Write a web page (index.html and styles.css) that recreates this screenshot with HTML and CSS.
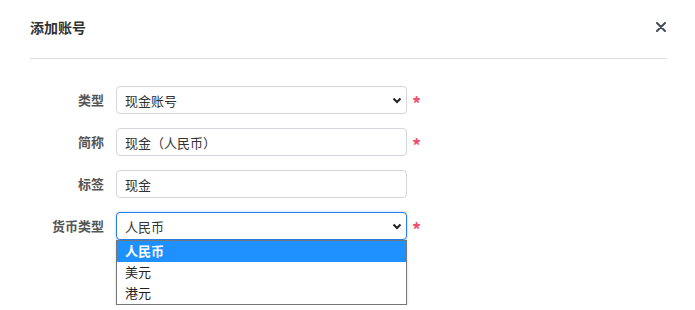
FILE: index.html
```html
<!DOCTYPE html>
<html>
<head>
    <meta charset="utf-8">
    <title>添加账号</title>
    <link rel="stylesheet" href="styles.css">
</head>
<body>
    <div class="modal">
        <div class="modal-header">
            <h2 class="modal-title">添加账号</h2>
            <span class="modal-close">
                <svg width="10" height="10" viewBox="0 0 10 10"><path d="M1 1L9 9M9 1L1 9" stroke="#444b54" stroke-width="2" stroke-linecap="round"/></svg>
            </span>
        </div>

        <div class="form">
            <div class="form-row">
                <label class="form-label">类型</label>
                <div class="field select">
                    <span>现金账号</span>
                    <svg class="chevron" width="10" height="7" viewBox="0 0 10 7"><path d="M1.5 1.5L5 5L8.5 1.5" fill="none" stroke="#222" stroke-width="2"/></svg>
                </div>
                <span class="required">*</span>
            </div>
            <div class="form-row">
                <label class="form-label">简称</label>
                <div class="field">现金（人民币）</div>
                <span class="required">*</span>
            </div>
            <div class="form-row">
                <label class="form-label">标签</label>
                <div class="field">现金</div>
            </div>
            <div class="form-row">
                <label class="form-label">货币类型</label>
                <div class="select-wrap">
                    <div class="field select focus">
                        <span>人民币</span>
                        <svg class="chevron" width="10" height="7" viewBox="0 0 10 7"><path d="M1.5 1.5L5 5L8.5 1.5" fill="none" stroke="#222" stroke-width="2"/></svg>
                    </div>
                    <!-- 展开的下拉列表 -->
                    <ul class="dropdown">
                        <li class="active">人民币</li>
                        <li>美元</li>
                        <li>港元</li>
                    </ul>
                </div>
                <span class="required">*</span>
            </div>
        </div>
    </div>
</body>
</html>
```

FILE: styles.css
```css
body {
    margin: 0;
    background: #fff;
    font-family: "Noto Sans CJK SC", "Liberation Sans", sans-serif;
    color: #333;
}

.modal {
    padding: 0 28px 0 30px;
}

.modal-header {
    display: flex;
    justify-content: space-between;
    align-items: flex-start;
    box-sizing: border-box;
    height: 59px;
    padding-top: 17px;
    border-bottom: 1px solid #dcdde6;
}

.modal-title {
    margin: 0;
    font-size: 14px;
    line-height: 20px;
    font-weight: bold;
    color: #333;
}

.modal-close {
    display: flex;
    margin-top: 5px;
    margin-right: 1px;
}

.form {
    padding-top: 27px;
    display: flex;
    flex-direction: column;
    gap: 14px;
}

.form-row {
    display: flex;
    align-items: flex-start;
}

.form-label {
    width: 74px;
    line-height: 28px;
    text-align: right;
    margin-right: 12px;
    font-size: 13px;
    font-weight: bold;
    color: #555;
}

.field {
    box-sizing: border-box;
    width: 291px;
    height: 28px;
    padding: 0 8px;
    display: flex;
    align-items: center;
    border: 1px solid #d5d5dd;
    border-radius: 4px;
    font-size: 13px;
    color: #333;
    background: #fff;
}

.select {
    justify-content: space-between;
    padding-right: 4px;
}

.select.focus {
    border-color: #2b7de9;
    box-shadow: 0 0 2px rgba(43, 125, 233, 0.5);
}

.select-wrap {
    display: flex;
    flex-direction: column;
}

.dropdown {
    box-sizing: border-box;
    width: 291px;
    margin: 0;
    padding: 0;
    list-style: none;
    border: 1px solid #767676;
    background: #fff;
    box-shadow: 0 1px 3px rgba(0, 0, 0, 0.15);
}

.dropdown li {
    height: 21px;
    line-height: 19px;
    padding: 0 8px;
    font-size: 13px;
    color: #222;
}

.dropdown li.active {
    background: #1e90ff;
    color: #fff;
    font-weight: bold;
}

.required {
    margin-left: 5px;
    color: #f0506e;
    font-size: 18px;
    font-weight: bold;
    line-height: 28px;
    height: 28px;
    padding-top: 3px;
    box-sizing: border-box;
}
```
